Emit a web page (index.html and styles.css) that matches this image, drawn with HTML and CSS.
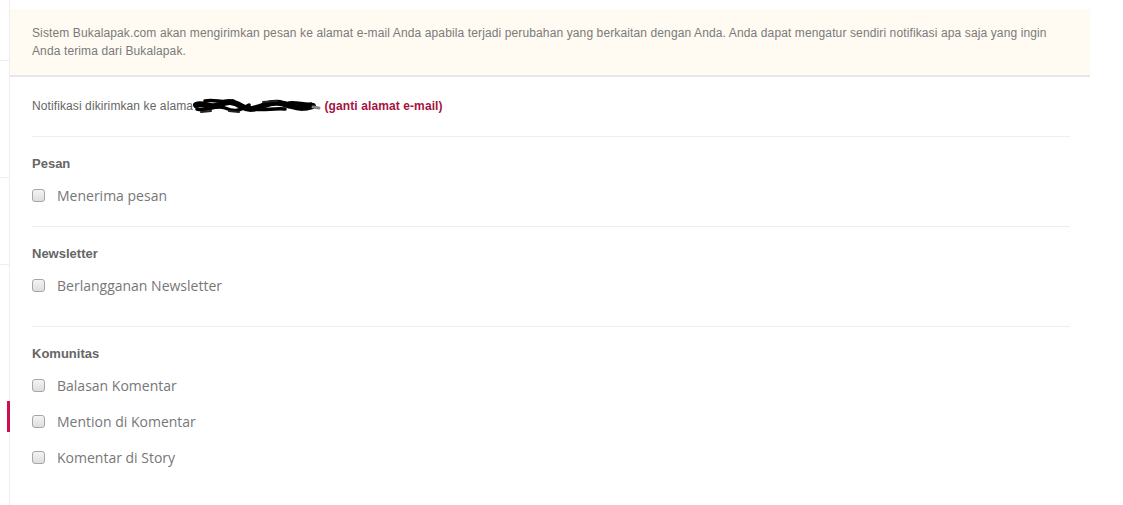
FILE: index.html
```html
<!DOCTYPE html>
<html lang="id">
<head>
<meta charset="utf-8">
<title>Pengaturan Notifikasi</title>
<link rel="stylesheet" href="styles.css">
</head>
<body>
<div class="page">
  <aside class="sidebar">
    <div class="side-item side-item--a"></div>
    <div class="side-item side-item--b"></div>
    <div class="side-item side-item--c"></div>
    <div class="side-spacer"></div>
    <div class="side-active"></div>
  </aside>
  <main class="main">
    <div class="notice">Sistem Bukalapak.com akan mengirimkan pesan ke alamat e-mail Anda apabila terjadi perubahan yang berkaitan dengan Anda. Anda dapat mengatur sendiri notifikasi apa saja yang ingin Anda terima dari Bukalapak.</div>
    <div class="content">
      <p class="email-line">Notifikasi dikirimkan ke alama<span class="redact"><svg width="128" height="18" viewBox="0 0 128 18"><path d="M3 8 C10 5 18 12 26 8 S40 4 48 9 S62 12 72 8 S88 6 98 9 S112 11 120 9" stroke="#000" stroke-width="6" fill="none" stroke-linecap="round"/><path d="M4 12 C14 15 22 7 32 11 S46 14 56 8 M12 4 C20 2 30 6 40 4 M60 12 C70 14 80 11 92 12 M96 6 C104 5 112 8 118 7" stroke="#000" stroke-width="3.5" fill="none" stroke-linecap="round"/><path d="M8 15 L18 14 M36 14 L46 15 M70 5 L84 4" stroke="#222" stroke-width="2" fill="none" stroke-linecap="round"/><path d="M120 10 L126 11" stroke="#888" stroke-width="3" stroke-linecap="round"/></svg></span> <a class="link" href="#">(ganti alamat e-mail)</a></p>
      <section class="group">
        <h3 class="group-title">Pesan</h3>
        <label class="opt"><input type="checkbox" class="cb"><span>Menerima pesan</span></label>
      </section>
      <section class="group group--tall">
        <h3 class="group-title">Newsletter</h3>
        <label class="opt"><input type="checkbox" class="cb"><span>Berlangganan Newsletter</span></label>
      </section>
      <section class="group group--last">
        <h3 class="group-title">Komunitas</h3>
        <label class="opt"><input type="checkbox" class="cb"><span>Balasan Komentar</span></label>
        <label class="opt"><input type="checkbox" class="cb"><span>Mention di Komentar</span></label>
        <label class="opt"><input type="checkbox" class="cb"><span>Komentar di Story</span></label>
      </section>
    </div>
  </main>
</div>
</body>
</html>
```
FILE: styles.css
```css
html, body {
  margin: 0;
  padding: 0;
  background: #fff;
}
body {
  font-family: "Liberation Sans", Arial, sans-serif;
  color: #666;
}
.page {
  display: flex;
  align-items: stretch;
  min-height: 505px;
}
.sidebar {
  width: 9px;
  border-right: 1px solid #eeeeee;
  display: flex;
  flex-direction: column;
  flex-shrink: 0;
}
.side-item {
  border-bottom: 1px solid #eeeeee;
}
.side-item--a { height: 60px; }
.side-item--b { height: 116px; }
.side-item--c { height: 86px; }
.side-spacer { height: 136px; }
.side-active {
  height: 31px;
  margin-right: -1px;
  border-right: 3px solid #d0104c;
}
.main {
  width: 1080px;
  padding-top: 9px;
}
.notice {
  background: #fffaf2;
  border-bottom: 2px solid #e8e8e8;
  padding: 15px 20px 15px 22px;
  font-size: 12px;
  line-height: 18px;
  letter-spacing: 0.12px;
  color: #7a7a7a;
}
.content {
  padding: 0 20px 0 22px;
}
.email-line {
  margin: 0;
  padding: 20px 0 21px;
  font-size: 12px;
  line-height: 18px;
  letter-spacing: 0.1px;
  color: #666;
  border-bottom: 1px solid #eeeeee;
}
.redact {
  display: inline-block;
  width: 128px;
  height: 18px;
  vertical-align: top;
}
.redact svg {
  display: block;
}
.link {
  color: #a5133f;
  font-weight: bold;
  text-decoration: none;
}
.group {
  padding: 18px 0 13px;
  border-bottom: 1px solid #eeeeee;
}
.group--tall {
  padding-bottom: 23px;
}
.group--last {
  border-bottom: 0;
}
.group-title {
  margin: 0 0 4px;
  font-size: 13px;
  line-height: 18px;
  font-weight: bold;
  color: #666;
}
.opt {
  display: flex;
  align-items: center;
  height: 36px;
  gap: 12px;
  font-family: "Open Sans", sans-serif;
  font-size: 14px;
  color: #777;
}
.cb {
  appearance: none;
  -webkit-appearance: none;
  margin: 0;
  width: 13px;
  height: 13px;
  border: 1px solid #a6a6a6;
  border-radius: 3px;
  background: linear-gradient(#f4f4f4, #dedede);
  flex-shrink: 0;
}
```
